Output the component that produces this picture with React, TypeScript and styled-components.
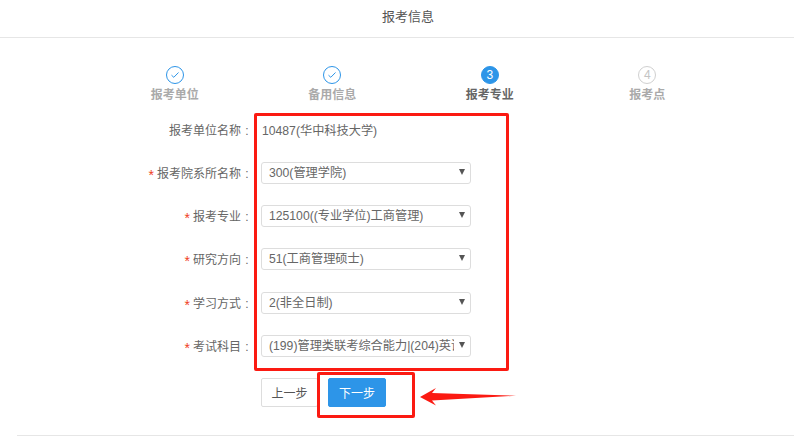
import React from 'react';
import styled, { createGlobalStyle } from 'styled-components';

const GlobalStyle = createGlobalStyle`
  html, body {
    margin: 0;
    padding: 0;
    background: #fff;
  }
  body {
    font-family: "Liberation Sans", "Noto Sans CJK SC", sans-serif;
    font-size: 12px;
    color: #666;
  }
`;

const steps = [
  { label: '报考单位', state: 'done' },
  { label: '备用信息', state: 'done' },
  { label: '报考专业', state: 'active', num: '3' },
  { label: '报考点', state: 'todo', num: '4' },
];

const fields = [
  { label: '报考院系所名称', value: '300(管理学院)' },
  { label: '报考专业', value: '125100((专业学位)工商管理)' },
  { label: '研究方向', value: '51(工商管理硕士)' },
  { label: '学习方式', value: '2(非全日制)' },
  { label: '考试科目', value: '(199)管理类联考综合能力|(204)英语二|(303)数学三' },
];

const App = () => {
  return (
    <Page>
      <GlobalStyle />
      <Header>报考信息</Header>
      <Steps>
        {steps.map((s) => (
          <Step key={s.label}>
            <Circle $state={s.state}>
              {s.state === 'done' ? (
                <svg width="10" height="8" viewBox="0 0 10 8" fill="none">
                  <path d="M1.5 4.2 L3.8 6.3 L8.5 1.5" stroke="#2d95e8" strokeWidth="1" />
                </svg>
              ) : (
                s.num
              )}
            </Circle>
            <StepLabel $state={s.state}>{s.label}</StepLabel>
          </Step>
        ))}
      </Steps>
      <Form>
        <Row>
          <Label>
            报考单位名称<Colon>:</Colon>
          </Label>
          <Static>10487(华中科技大学)</Static>
        </Row>
        {fields.map((f) => (
          <Row key={f.label}>
            <Label>
              <Star>*</Star>
              {f.label}
              <Colon>:</Colon>
            </Label>
            <SelectBox>
              <Select defaultValue={f.value}>
                <option>{f.value}</option>
              </Select>
            </SelectBox>
          </Row>
        ))}
        <Actions>
          <Button>上一步</Button>
          <Button $primary>下一步</Button>
        </Actions>
        <FormMark />
        <ButtonMark />
        <Arrow width="98" height="22" viewBox="0 0 98 22">
          <path d="M1 11 L17 2 L13 7 L97 9.7 L13 14.5 L17 19.5 Z" fill="#fb1a12" />
        </Arrow>
      </Form>
      <Footer />
    </Page>
  );
};

const Page = styled.div`
  width: 794px;
  height: 447px;
  overflow: hidden;
`;

const Header = styled.div`
  height: 33px;
  padding: 4px 0 0 22px;
  line-height: 26px;
  border-bottom: 1px solid #e6e6e6;
  text-align: center;
  font-size: 13px;
  color: #555;
`;

const Steps = styled.div`
  display: flex;
  justify-content: flex-start;
  padding: 28px 0 0 96px;
`;

const Step = styled.div`
  width: 157.5px;
  display: flex;
  flex-direction: column;
  align-items: center;
`;

const Circle = styled.div<{ $state: string }>`
  box-sizing: border-box;
  width: 18px;
  height: 18px;
  border-radius: 50%;
  display: flex;
  align-items: center;
  justify-content: center;
  font-size: 12px;
  border: 1px solid ${(p) => (p.$state === 'todo' ? '#d0d0d0' : '#2d95e8')};
  background: ${(p) => (p.$state === 'active' ? '#2d95e8' : '#fff')};
  color: ${(p) => (p.$state === 'active' ? '#fff' : '#c4c4c4')};
`;

const StepLabel = styled.div<{ $state: string }>`
  margin-top: 3px;
  line-height: 17px;
  font-size: 12px;
  font-weight: 700;
  color: ${(p) => (p.$state === 'active' ? '#666' : '#aaa')};
`;

const Form = styled.div`
  position: relative;
  padding-top: 14.5px;
`;

const Row = styled.div`
  display: flex;
  align-items: center;
  height: 22px;
  margin-bottom: 21.3px;
`;

const Label = styled.div`
  width: 253px;
  flex: none;
  text-align: right;
  font-size: 12px;
  color: #666;
`;

const Colon = styled.span`
  display: inline-block;
  width: 12px;
  text-align: center;
`;

const Star = styled.span`
  color: #f0401c;
  font-size: 14px;
  margin-right: 3px;
  vertical-align: -2px;
  line-height: 1;
`;

const Static = styled.div`
  margin-left: 9px;
  font-size: 12.2px;
  color: #666;
`;

const SelectBox = styled.div`
  position: relative;
  margin-left: 8px;
  width: 210px;
  height: 22px;

  &::after {
    content: '';
    position: absolute;
    right: 6px;
    top: 7px;
    border-left: 3px solid transparent;
    border-right: 3px solid transparent;
    border-top: 6px solid #555;
  }
`;

const Select = styled.select`
  appearance: none;
  box-sizing: border-box;
  width: 100%;
  height: 22px;
  padding: 0 16px 0 7px;
  border: 1px solid #ddd;
  border-radius: 3px;
  background: #fff;
  font: 12.2px "Liberation Sans", "Noto Sans CJK SC", sans-serif;
  color: #666;
`;

const Actions = styled.div`
  display: flex;
  gap: 10px;
  margin: 0 0 0 261px;
`;

const Button = styled.div<{ $primary?: boolean }>`
  box-sizing: border-box;
  width: ${(p) => (p.$primary ? '58px' : '57px')};
  height: 29px;
  border-radius: 2px;
  display: flex;
  align-items: center;
  justify-content: center;
  font-size: 12px;
  border: 1px solid ${(p) => (p.$primary ? '#2d95e8' : '#ddd')};
  background: ${(p) => (p.$primary ? '#2d95e8' : '#fff')};
  color: ${(p) => (p.$primary ? '#fff' : '#555')};
`;

const FormMark = styled.div`
  position: absolute;
  box-sizing: border-box;
  left: 254px;
  top: 9px;
  width: 255px;
  height: 258px;
  border: 3px solid #fb1a12;
  border-radius: 2px;
`;

const ButtonMark = styled.div`
  position: absolute;
  box-sizing: border-box;
  left: 317px;
  top: 268px;
  width: 98px;
  height: 46px;
  border: 3px solid #fb1a12;
  border-radius: 2px;
`;

const Arrow = styled.svg`
  position: absolute;
  left: 419px;
  top: 282px;
`;

const Footer = styled.div`
  margin: 28px 0 0 17px;
  border-top: 1px solid #e6e6e6;
`;

export default App;
